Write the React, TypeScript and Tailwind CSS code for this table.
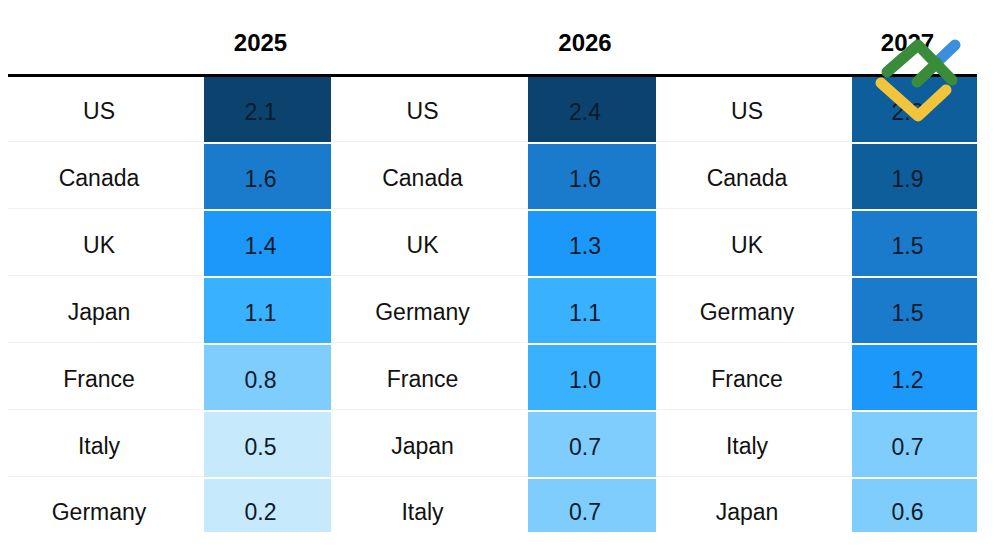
import { Fragment } from "react";

const NAVY = "bg-[#0b426e]";
const DEEP = "bg-[#0e5e9c]";
const MID = "bg-[#1a7bcc]";
const BRIGHT = "bg-[#1c98fa]";
const SKY = "bg-[#3ab1fc]";
const LIGHT = "bg-[#7ecdfd]";
const PALE = "bg-[#c6e9fc]";

type Cell = { country: string; value: string; bg: string };

const rows: Cell[][] = [
  [
    { country: "US", value: "2.1", bg: NAVY },
    { country: "US", value: "2.4", bg: NAVY },
    { country: "US", value: "2.3", bg: DEEP },
  ],
  [
    { country: "Canada", value: "1.6", bg: MID },
    { country: "Canada", value: "1.6", bg: MID },
    { country: "Canada", value: "1.9", bg: DEEP },
  ],
  [
    { country: "UK", value: "1.4", bg: BRIGHT },
    { country: "UK", value: "1.3", bg: BRIGHT },
    { country: "UK", value: "1.5", bg: MID },
  ],
  [
    { country: "Japan", value: "1.1", bg: SKY },
    { country: "Germany", value: "1.1", bg: SKY },
    { country: "Germany", value: "1.5", bg: MID },
  ],
  [
    { country: "France", value: "0.8", bg: LIGHT },
    { country: "France", value: "1.0", bg: SKY },
    { country: "France", value: "1.2", bg: BRIGHT },
  ],
  [
    { country: "Italy", value: "0.5", bg: PALE },
    { country: "Japan", value: "0.7", bg: LIGHT },
    { country: "Italy", value: "0.7", bg: LIGHT },
  ],
  [
    { country: "Germany", value: "0.2", bg: PALE },
    { country: "Italy", value: "0.7", bg: LIGHT },
    { country: "Japan", value: "0.6", bg: LIGHT },
  ],
];

const cols = "grid w-[969px] grid-cols-[196px_127px_197px_128px_196px_125px]";

function Logo() {
  return (
    <svg
      className="absolute left-[865px] top-[30px] w-[105px] h-[100px]"
      viewBox="865 30 105 100"
      fill="none"
      strokeLinecap="round"
      strokeLinejoin="round"
      strokeWidth={11}
    >
      <path d="M935 64 L955 45" stroke="#3b8fdf" />
      <path d="M917 82 L937 63" stroke="#3a8c3b" />
      <path d="M887 72 L918 45 L952 80" stroke="#3a8c3b" />
      <path d="M881 83 L918 116 L946 90" stroke="#f1c43b" />
    </svg>
  );
}

export default function App() {
  return (
    <div className="relative w-[1000px] h-[545px] overflow-hidden bg-white font-['Liberation_Sans',Arial,sans-serif] text-[#111]">
      <div className="pl-2">
        <div className={`${cols} h-[77px] border-b-[3px] border-black`}>
          {["2025", "2026", "2027"].map((y) => (
            <Fragment key={y}>
              <div />
              <div className="flex items-center justify-center pr-[14px] pt-[12px] text-[24px] font-bold text-black">
                {y}
              </div>
            </Fragment>
          ))}
        </div>
        <div className="flex flex-col gap-[2px]">
          {rows.map((row, i) => {
            const last = i === rows.length - 1;
            return (
              <div key={i} className={`${cols} ${last ? "h-[53px]" : "h-[65px]"}`}>
                {row.map((c, j) => (
                  <Fragment key={j}>
                    <div
                      className={`flex items-center justify-center pr-[14px] text-[23px] ${last ? "pt-[13px]" : "pt-[5px] border-b border-[#f1f1f1]"}`}
                    >
                      {c.country}
                    </div>
                    <div
                      className={`flex items-center justify-center pr-[14px] text-[23px] text-[#0c1a29] ${c.bg} ${last ? "pt-[13px]" : "pt-[5px]"}`}
                    >
                      {c.value}
                    </div>
                  </Fragment>
                ))}
              </div>
            );
          })}
        </div>
      </div>
      <Logo />
    </div>
  );
}
